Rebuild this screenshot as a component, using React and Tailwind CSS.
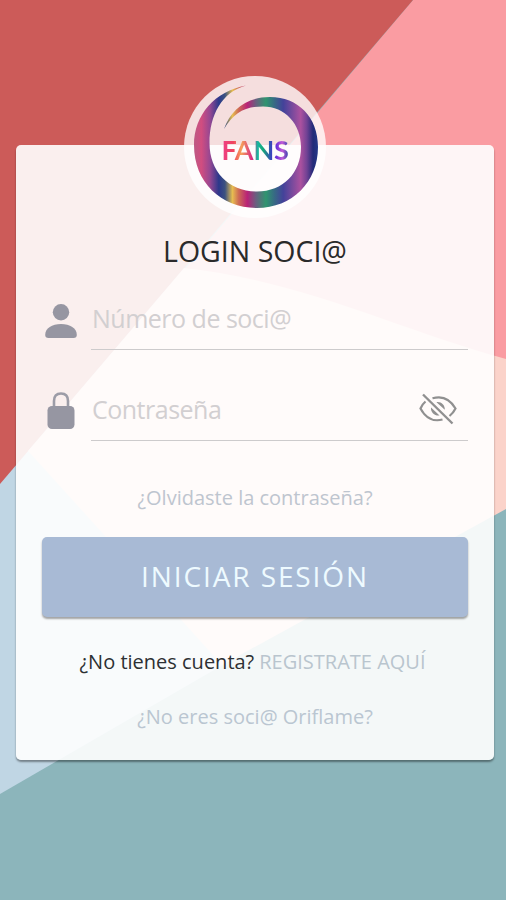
import React from "react";

function Background() {
  return (
    <svg className="absolute inset-0 h-full w-full" viewBox="0 0 506 900" preserveAspectRatio="none" aria-hidden="true">
      <rect width="506" height="900" fill="#8cb5bb" />
      <path d="M0 480 L30 440 L240 655 L0 794Z" fill="#c0d6e4" />
      <path d="M413 0H506V362L180 275Z" fill="#fa9ca2" />
      <path d="M0 0H413L0 484Z" fill="#cc5b59" />
      <path d="M28 451 L184 268 C300 280 400 330 506 359 V509 L222 665Z" fill="#fbd3ca" />
    </svg>
  );
}

function Logo() {
  return (
    <div className="relative grid h-[142px] w-[142px] shrink-0 place-items-center rounded-full bg-white/80">
      <svg className="absolute inset-0" width="142" height="142" viewBox="0 0 142 142" aria-hidden="true">
        <defs>
          <linearGradient id="ring" gradientUnits="userSpaceOnUse" x1="10" y1="0" x2="134" y2="0">
            <stop offset="0" stopColor="#bd5a84" />
            <stop offset=".06" stopColor="#d14d80" />
            <stop offset=".13" stopColor="#954792" />
            <stop offset=".2" stopColor="#2c388b" />
            <stop offset=".25" stopColor="#3c5280" />
            <stop offset=".31" stopColor="#e7bd50" />
            <stop offset=".36" stopColor="#ce6b55" />
            <stop offset=".43" stopColor="#b92277" />
            <stop offset=".5" stopColor="#696080" />
            <stop offset=".58" stopColor="#30956f" />
            <stop offset=".65" stopColor="#376985" />
            <stop offset=".72" stopColor="#43429a" />
            <stop offset=".86" stopColor="#ab519f" />
            <stop offset=".91" stopColor="#714294" />
            <stop offset=".96" stopColor="#222a78" />
            <stop offset="1" stopColor="#253888" />
          </linearGradient>
        </defs>
        <path
          fill="url(#ring)"
          d="M62 9.500 C31 15 10 39 10 69 C10 107 38 132 73 132 C108 132 134 106 134 71 C134 41 114 21 86 21 C63 21 47 33 40 53 C50 37 60 30.500 79 30.500 C101 30.500 117 48 117 71 C117 97 99 115.500 73 115.500 C45 115.500 25.500 96 25.500 67 C25.500 39 38 16 62 9.500Z"
        />
      </svg>
      <span className="relative mt-[5px] bg-linear-[90deg,#ed3e8b_0%,#f0435f_18%,#f5a05a_30%,#d92782_46%,#18b7a0_54%,#16a878_62%,#3e35c8_76%,#7132d8_82%,#c45bd8_90%,#2740a8_100%] bg-clip-text font-['Lato',sans-serif] text-[27px] leading-8 font-bold tracking-[-0.2px] text-transparent">
        FANS
      </span>
    </div>
  );
}

function PersonIcon() {
  return (
    <svg width="32" height="34" viewBox="0 0 32 34" fill="#9696a2" aria-hidden="true">
      <circle cx="16" cy="8.200" r="8.200" />
      <path d="M.2 31 C.2 24 7 20 16 20 S31.800 24 31.800 31 Q31.800 34 28.500 34 H3.500 Q.2 34 .2 31Z" />
    </svg>
  );
}

function LockIcon() {
  return (
    <svg width="28" height="37" viewBox="0 0 28 37" aria-hidden="true">
      <path d="M7 16 V9 Q7 1.500 14 1.500 T21 9 V16" fill="none" stroke="#9c9ca7" strokeWidth="2.600" />
      <rect x=".5" y="14" width="27" height="23" rx="4.500" fill="#9696a2" />
    </svg>
  );
}

function EyeOffIcon() {
  return (
    <svg width="38" height="32" viewBox="0 0 38 32" fill="none" stroke="#909090" strokeWidth="2.200" aria-hidden="true">
      <path d="M4 1.500 L33.500 30.500" strokeWidth="2.400" />
      <path d="M13.500 5.300 C23 2.500 31 6 36.500 15.500 C35 18.600 33 21 30.500 23" />
      <path d="M6.500 8.500 Q3 11.500 1.500 15.500 C6.500 25 14.500 29 23.500 26.500" />
      <path d="M17.500 9.200 C22 8.500 26 12 25.800 16.800Z" fill="#909090" stroke="none" />
      <path d="M12 14.500 C11.500 19.500 15.500 23 20.500 22.500Z" fill="#909090" stroke="none" />
    </svg>
  );
}

function Field({ icon, label, type, action }) {
  return (
    <label className="flex h-[91px] items-end">
      <span className="flex w-[49px] shrink-0 justify-center pr-3 pb-[12px]">{icon}</span>
      <span className="flex h-[61px] min-w-0 flex-1 items-center border-b-[1.5px] border-[#cdcbcc] pb-[2px]">
        <input
          type={type}
          placeholder={label}
          className="h-full min-w-0 flex-1 bg-transparent pl-px text-[25px] tracking-[-0.5px] text-gray-700 outline-none placeholder:text-[#d2cfd1]"
        />
        {action}
      </span>
    </label>
  );
}

export default function App() {
  return (
    <div className="relative h-[900px] w-full overflow-hidden font-['Open_Sans',sans-serif]">
      <Background />
      <main className="relative mx-auto mt-[145px] mr-3 ml-4 flex h-[615px] flex-col rounded-[5px] bg-white/90 px-[26px] shadow-[0_2px_2px_rgba(0,0,0,0.4)]">
        <div className="-mt-[69px] flex justify-center">
          <Logo />
        </div>
        <h1 className="mt-[13px] text-center text-[28.5px] leading-10 text-[#2a2a2a]">LOGIN SOCI@</h1>
        <form className="-mt-[12px] flex flex-col">
          <Field icon={<PersonIcon />} label="Número de soci@" type="text" />
          <Field
            icon={<LockIcon />}
            label="Contraseña"
            type="password"
            action={
              <button type="button" aria-label="Mostrar contraseña" className="mr-[11px]">
                <EyeOffIcon />
              </button>
            }
          />
          <a className="mt-[42px] text-center text-[20px] leading-[30px] text-[#bec5cf]">¿Olvidaste la contraseña?</a>
          <button
            type="button"
            className="mt-6 h-[80px] rounded-[5px] bg-[#a8bad5] pb-[3px] text-[28px] tracking-[1.9px] text-[#eefaff] shadow-[0_2px_2px_rgba(0,0,0,0.35)]"
          >
            INICIAR SESIÓN
          </button>
        </form>
        <p className="mt-[30px] flex justify-center gap-[5px] pr-[5px] text-[20px] leading-[30px] whitespace-nowrap text-[#2d3033]">
          <span>¿No tienes cuenta?</span>
          <a className="text-[#b9c5ce]">REGISTRATE AQUÍ</a>
        </p>
        <a className="mt-[25px] text-center text-[20px] leading-[30px] text-[#bac6d1]">¿No eres soci@ Oriflame?</a>
      </main>
    </div>
  );
}
